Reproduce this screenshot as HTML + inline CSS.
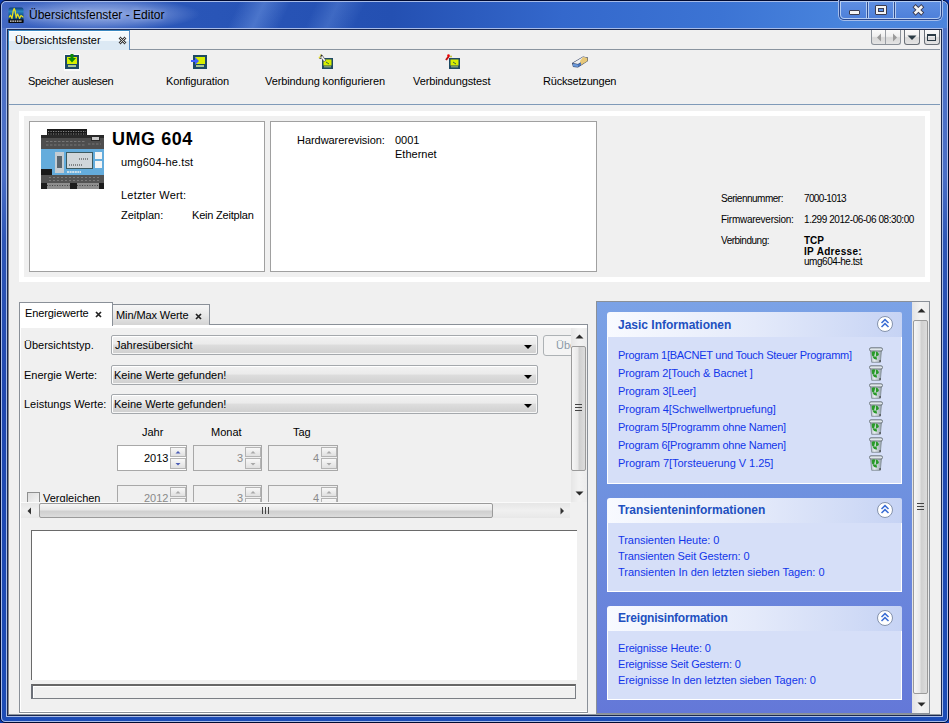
<!DOCTYPE html>
<html><head><meta charset="utf-8">
<style>
*{margin:0;padding:0;box-sizing:border-box}
html,body{width:949px;height:723px;overflow:hidden;background:#0a3aae}
body{position:relative;font-family:"Liberation Sans",sans-serif;font-size:11px;color:#000}
.a{position:absolute}
.t{position:absolute;white-space:nowrap;line-height:1}
#frame{left:0;top:0;width:949px;height:723px;border-radius:6px 6px 5px 5px;background:linear-gradient(#5074c8 0,#4a6ec6 175px,#2e56b6 240px,#2048b0 400px,#1c4cb6 723px);border:1px solid #000a30}
#frameLight{left:1px;top:1px;width:947px;height:721px;border-radius:5px 5px 4px 4px;border:1px solid #a8bce8}
#title{left:2px;top:2px;width:945px;height:26px;border-radius:5px 5px 0 0;
background:
 radial-gradient(ellipse 100px 17px at 98px 12px, rgba(160,182,232,.9) 0, rgba(140,165,225,.6) 55%, rgba(140,165,225,0) 100%),
 linear-gradient(115deg, rgba(255,255,255,0) 0px, rgba(255,255,255,0) 215px, rgba(110,150,225,.5) 238px, rgba(255,255,255,0) 262px, rgba(255,255,255,0) 285px, rgba(110,150,225,.35) 305px, rgba(255,255,255,0) 330px),
 linear-gradient(90deg,#4368c4 0,#3a62c0 25px,#2a56b8 180px,#2450b2 390px,#3468cc 560px,#3c74d4 720px,#4a86de 860px,#4c84dc 949px)}
#contentLight{left:6px;top:28px;width:937px;height:689px;border:1px solid #a8bce8}
#contentDark{left:7px;top:29px;width:935px;height:687px;border:1px solid #1a2850}
#content{left:8px;top:30px;width:933px;height:685px;background:#f0f0f0;border-left:1px solid #8a8a8a;border-right:1px solid #e8e8e8;border-bottom:1px solid #9098a0}
.combo{width:427px;height:20px;border:1px solid #a4a8ac;border-radius:2px;box-shadow:inset 1px 1px 0 #fff,inset -1px -1px 0 #f6f6f6;background:linear-gradient(#f2f2f2 0,#ebebeb 45%,#dddddd 50%,#cfcfcf 100%)}
.combo:after{content:"";position:absolute;right:5px;top:9px;border-left:4px solid transparent;border-right:4px solid transparent;border-top:4px solid #000}
.sbtn{width:16px;border:1px solid #b4b4b4;background:linear-gradient(#f8f8f8,#ececec 50%,#e0e0e0)}
.spin{width:70px;height:26px;border:1px solid #a8a8a8;background:#f0f0f0}

.pane{left:607px;width:295px}
.pane:before{content:"";position:absolute;left:0;top:0;width:295px;height:25px;border-radius:3px 2px 0 0;background:linear-gradient(90deg,#f8faff 0,#e4eafa 50%,#c6d3f4 100%)}
.pane:after{content:"";position:absolute;left:0;top:25px;right:0;bottom:0;background:#d6dff8;border:1px solid #fff;border-top:none}
.ptitle{font-size:12px;font-weight:bold;color:#2150c0}
.plink{font-size:11px;color:#1236ea}
.chev{width:16px;height:16px;border-radius:50%;border:1px solid #8aa0cc;background:#fff}
</style></head>
<body>
<div class="a" id="frame"></div>
<div class="a" id="frameLight"></div>
<div class="a" id="title"></div>
<div class="a" id="contentLight"></div>
<div class="a" id="contentDark"></div>
<div class="a" id="content"></div>

<!-- title bar -->
<svg class="a" style="left:8px;top:7px" width="16" height="16" viewBox="0 0 16 16">
 <defs><linearGradient id="ig" x1="0" y1="0" x2="0" y2="1"><stop offset="0" stop-color="#0c3c74"/><stop offset=".25" stop-color="#2a88c0"/><stop offset=".5" stop-color="#10508e"/><stop offset="1" stop-color="#082a5a"/></linearGradient></defs>
 <rect x="0.5" y="0.5" width="15" height="15.5" rx="2" fill="url(#ig)"/>
 <polyline points="1,10.5 2.5,8.2 4,11.5 5.2,4 6.2,1.5 7.2,4 8.2,10.8 9.5,7 10.6,9 11.6,11.5 13,8.5 14.5,9.5 15.2,10.5" fill="none" stroke="#e6e020" stroke-width="1.3" stroke-linejoin="round"/>
 <rect x="0.5" y="12.5" width="15" height="3.5" fill="#0a0a0a"/>
 <path d="M2 14.2 H14" stroke="#e8e8e8" stroke-width="1.3" stroke-dasharray="1.6 .7"/>
</svg>
<div class="t" style="left:29px;top:9px;font-size:12px;color:#000;text-shadow:0 0 5px rgba(190,205,240,.8)">Übersichtsfenster - Editor</div>

<!-- caption buttons -->
<div class="a" style="left:838px;top:0px;width:105px;height:21px;border:1px solid #a4bcea;border-top:none;border-radius:0 0 6px 6px"></div>
<div class="a" style="left:839px;top:0px;width:103px;height:20px;border:1px solid #28468e;border-top:none;border-radius:0 0 5px 5px"></div>
<div class="a" style="left:840px;top:1px;width:101px;height:18px;border:1px solid #b4ccf2;border-radius:0 0 4px 4px;background:linear-gradient(#5e8ee2,#4e80da)"></div>
<div class="a" style="left:866px;top:2px;width:3px;height:16px;background:#b4ccf2;border-left:1px solid #b4ccf2;border-right:1px solid #b4ccf2"></div>
<div class="a" style="left:867px;top:2px;width:1px;height:16px;background:#2c4a90"></div>
<div class="a" style="left:893px;top:2px;width:1px;height:16px;background:#b4ccf2"></div>
<div class="a" style="left:894px;top:2px;width:1px;height:16px;background:#2c4a90"></div>
<div class="a" style="left:895px;top:2px;width:1px;height:16px;background:#b4ccf2"></div>
<div class="a" style="left:849px;top:10px;width:11px;height:5px;background:#f4f4f4;border:1px solid #3c3c50;border-radius:1px"></div>
<div class="a" style="left:875px;top:5px;width:12px;height:10px;border:1px solid #3c3c50;border-radius:1px;background:#f4f4f4"></div>
<div class="a" style="left:878px;top:8px;width:6px;height:4px;background:#5a92ea;border:1px solid #3c3c50"></div>
<svg class="a" style="left:912px;top:4px" width="13" height="12" viewBox="0 0 13 12">
 <path d="M3.6 3.2 L9.2 8.6 M9.2 3.2 L3.6 8.6" stroke="#3a3a50" stroke-width="4.4" stroke-linecap="square"/>
 <path d="M3.6 3.2 L9.2 8.6 M9.2 3.2 L3.6 8.6" stroke="#f4f4f4" stroke-width="2.6" stroke-linecap="square"/>
</svg>

<!-- editor tab header -->
<div class="a" style="left:9px;top:30px;width:931px;height:20px;background:#f0f0f0;border-bottom:1px solid #8a94a0"></div>
<div class="a" style="left:8px;top:30px;width:122px;height:20px;background:linear-gradient(#f2f8fc 0,#f2f8fc 10px,#dce9f4 10px,#dce9f4 100%);border-left:1px solid #3a88c0;border-top:1px solid #3a88c0;border-right:1px solid #5a8ac0"></div>
<div class="a" style="left:9px;top:31px;width:120px;height:1px;background:#fff"></div>
<div class="t" style="left:15px;top:35px;font-size:11px;color:#000">Übersichtsfenster</div>
<svg class="a" style="left:118px;top:36px" width="9" height="9" viewBox="0 0 9 9">
 <path d="M1.5 1.5 L7.5 7.5 M7.5 1.5 L1.5 7.5" stroke="#3a3a3a" stroke-width="2.6"/>
 <path d="M1.5 1.5 L7.5 7.5 M7.5 1.5 L1.5 7.5" stroke="#d8d8d8" stroke-width="1"/>
</svg>
<!-- nav buttons -->
<div class="a" style="left:871px;top:30px;width:30px;height:15px;border:1px solid #8a9098;border-top:none;border-radius:0 0 3px 3px;background:linear-gradient(#fafafa,#f0f0f0 45%,#d8d8d8 55%,#e4e4e4)"></div>
<div class="a" style="left:885px;top:30px;width:1px;height:14px;background:#9a9ea4"></div>
<svg class="a" style="left:875px;top:33px" width="24" height="9" viewBox="0 0 24 9"><path d="M2 4.5 L6 0.5 L6 8.5Z" fill="#9a9a9a"/><path d="M18 0.5 L22 4.5 L18 8.5Z" fill="#9a9a9a"/></svg>
<div class="a" style="left:904px;top:30px;width:16px;height:15px;border:1px solid #6a7078;border-top:none;border-radius:0 0 3px 3px;background:linear-gradient(#fafafa,#f0f0f0 45%,#d8d8d8 55%,#e4e4e4)"></div>
<svg class="a" style="left:907px;top:35px" width="10" height="6" viewBox="0 0 10 6"><path d="M0.5 0.5 L9.5 0.5 L5 5Z" fill="#2a3a44"/></svg>
<div class="a" style="left:924px;top:30px;width:16px;height:15px;border:1px solid #6a7078;border-top:none;border-radius:0 0 3px 3px;background:linear-gradient(#fafafa,#f0f0f0 45%,#d8d8d8 55%,#e4e4e4)"></div>
<div class="a" style="left:927px;top:34px;width:9px;height:7px;border:1px solid #2a3a44;border-top-width:2px"></div>

<!-- toolbar -->
<div class="a" style="left:9px;top:104px;width:931px;height:1px;background:#7f9ab8"></div>
<svg class="a" style="left:64px;top:53px" width="17" height="18" viewBox="0 0 17 18">
 <rect x="0" y="1" width="16" height="17" fill="#fff" opacity=".7"/>
 <rect x="1" y="2" width="14" height="14" fill="#1e4a64"/>
 <rect x="3" y="4" width="10" height="7" fill="#d8f000"/>
 <rect x="4" y="12" width="8" height="2" fill="#a8c890"/>
 <path d="M6.5 1 L9.5 1 L9.5 5 L12 5 L8 9.5 L4 5 L6.5 5Z" fill="#0a8a0a"/>
</svg>
<svg class="a" style="left:190px;top:53px" width="18" height="18" viewBox="0 0 18 18">
 <rect x="3" y="2" width="14" height="14" fill="#1e4a64"/>
 <rect x="5" y="4" width="10" height="7" fill="#d8f000"/>
 <rect x="6" y="12" width="8" height="2" fill="#a8c890"/>
 <path d="M1 7 L5 7 L5 4 L9 8 L5 12 L5 9 L1 9Z" fill="#4060ff"/>
</svg>
<svg class="a" style="left:317px;top:53px" width="18" height="18" viewBox="0 0 18 18">
 <rect x="5" y="5" width="11" height="11" fill="#1e4a64"/>
 <rect x="6.5" y="6.5" width="8" height="6" fill="#d8f000"/>
 <rect x="7" y="13" width="7" height="1.5" fill="#7a9a70"/>
 <path d="M9 9 L12 11" stroke="#3a6a3a" stroke-width="1"/>
 <path d="M4.2 2.8 L8 8.2" stroke="#555" stroke-width="2.8"/>
 <path d="M4.4 3.2 L7.8 7.8" stroke="#f4f4f8" stroke-width="1.6"/>
 <circle cx="4.2" cy="2.6" r="1" fill="#222"/>
 <circle cx="2.6" cy="4.6" r="1" fill="#e8e030"/>
 <circle cx="3.4" cy="2" r=".8" fill="#f0f060"/>
 <circle cx="3.2" cy="5.4" r=".7" fill="#333"/>
</svg>
<svg class="a" style="left:443px;top:53px" width="18" height="18" viewBox="0 0 18 18">
 <rect x="6" y="5" width="11" height="11" fill="#1e4a64"/>
 <rect x="7.5" y="6.5" width="8" height="6" fill="#d8f000"/>
 <rect x="8" y="13" width="7" height="1.5" fill="#7a9a70"/>
 <path d="M10 9 L13 11" stroke="#3a6a3a" stroke-width="1"/>
 <path d="M3 7 L6 3" stroke="#c01010" stroke-width="2"/>
 <circle cx="5.5" cy="2.5" r="1.3" fill="#e00"/>
 <circle cx="8" cy="3.5" r="0.9" fill="#c0c020"/>
</svg>
<svg class="a" style="left:571px;top:55px" width="18" height="14" viewBox="0 0 18 14">
 <path d="M1 8 L12 1.5 L17 2.5 L17 6 L7 12.5 L2 12Z" fill="#2a3a60"/>
 <path d="M2 8 L7 9 L16 3 L12 2Z" fill="#f0f0f0"/>
 <path d="M9 6 L12 2 L16.5 3 L16.5 6 L10 10Z" fill="#e8c878"/>
 <path d="M2 8.5 L7 9.5 L7 12 L2 11.5Z" fill="#6a98d8"/>
 <path d="M7 9.5 L10 7.5 L10 10 L7 12Z" fill="#4a78c0"/>
</svg>
<div class="t" style="left:28px;top:76px;font-size:11px;letter-spacing:-0.3px">Speicher auslesen</div>
<div class="t" style="left:166px;top:76px;font-size:11px;letter-spacing:-0.15px">Konfiguration</div>
<div class="t" style="left:265px;top:76px;font-size:11px;letter-spacing:-0.1px">Verbindung konfigurieren</div>
<div class="t" style="left:413px;top:76px;font-size:11px;letter-spacing:-0.1px">Verbindungstest</div>
<div class="t" style="left:543px;top:76px;font-size:11px;letter-spacing:-0.2px">Rücksetzungen</div>

<!-- device panel -->
<div class="a" style="left:19px;top:111px;width:911px;height:171px;background:#fff"></div>
<div class="a" style="left:24px;top:116px;width:901px;height:161px;background:#f0f0f0"></div>
<div class="a" style="left:29px;top:121px;width:236px;height:151px;background:#fff;border:1px solid #a0a0a0"></div>
<div class="a" style="left:270px;top:121px;width:327px;height:151px;background:#fff;border:1px solid #a0a0a0"></div>
<svg class="a" style="left:41px;top:129px" width="63" height="60" viewBox="0 0 63 60">
 <rect x="6" y="0" width="40" height="7" fill="#1a1a1a"/>
 <path d="M7 2.5 H45 M7 5 H45" stroke="#8a8a8a" stroke-width="1" stroke-dasharray="1.2 1.3"/>
 <rect x="0" y="6" width="63" height="14" fill="#4e4e4e"/>
 <rect x="0" y="6" width="63" height="3" fill="#2a2a2a"/>
 <rect x="50" y="7" width="9" height="5" fill="#2a2a2a"/>
 <rect x="51" y="8" width="7" height="3" fill="#c8c8c8"/>
 <path d="M5 12.5 H44 M5 16 H44 M47 15 H60" stroke="#777" stroke-width="1" stroke-dasharray="2.5 1.5"/>
 <rect x="0" y="20" width="63" height="26" fill="#64acdc"/>
 <rect x="14" y="23" width="9" height="21" fill="#c4ccd2"/>
 <rect x="16" y="27" width="5" height="12" fill="#5a646c"/>
 <rect x="25" y="23" width="27" height="17" fill="#3c5a60"/>
 <rect x="26" y="24" width="25" height="15" fill="#d0d6da"/>
 <path d="M38 30 h9 M28 36 h14" stroke="#333" stroke-width="1" stroke-dasharray="1 1"/>
 <rect x="54" y="23" width="7" height="7" fill="#f4f4f4"/>
 <rect x="54" y="32" width="7" height="7" fill="#f4f4f4"/>
 <rect x="0" y="40" width="11" height="6" fill="#1a1a1a"/>
 <path d="M26 43 h14" stroke="#f0f0f0" stroke-width="1.6" stroke-dasharray="2 .6"/>
 <rect x="0" y="46" width="63" height="8" fill="#535353"/>
 <path d="M8 48.5 H58 M8 51.5 H58" stroke="#7a7a7a" stroke-width="1" stroke-dasharray="2 2"/>
 <rect x="0" y="54" width="63" height="6" fill="#1c1c1c"/>
 <rect x="6" y="54" width="23" height="6" fill="#8e8e8e"/>
 <rect x="36" y="54" width="22" height="6" fill="#8e8e8e"/>
 <path d="M6 56.5 H29 M36 56.5 H58" stroke="#444" stroke-dasharray="1 1.5"/>
</svg>
<div class="t" style="left:112px;top:130px;font-size:18px;font-weight:bold;letter-spacing:0.55px">UMG 604</div>
<div class="t" style="left:121px;top:157px;font-size:11px;letter-spacing:0.15px">umg604-he.tst</div>
<div class="t" style="left:121px;top:190px;font-size:11px;letter-spacing:0.2px">Letzter Wert:</div>
<div class="t" style="left:121px;top:210px;font-size:11px">Zeitplan:</div>
<div class="t" style="left:192px;top:210px;font-size:11px;letter-spacing:-0.2px">Kein Zeitplan</div>
<div class="t" style="left:297px;top:135px;font-size:11px;letter-spacing:-0.05px">Hardwarerevision:</div>
<div class="t" style="left:395px;top:135px;font-size:11px">0001</div>
<div class="t" style="left:395px;top:149px;font-size:11px">Ethernet</div>
<div class="t" style="left:721px;top:194px;font-size:10px;letter-spacing:-0.49px">Seriennummer:</div>
<div class="t" style="left:804px;top:194px;font-size:10px;letter-spacing:-0.65px">7000-1013</div>
<div class="t" style="left:721px;top:215px;font-size:10px;letter-spacing:-0.26px">Firmwareversion:</div>
<div class="t" style="left:804px;top:215px;font-size:10px;letter-spacing:-0.43px">1.299 2012-06-06 08:30:00</div>
<div class="t" style="left:721px;top:236px;font-size:10px;letter-spacing:-0.49px">Verbindung:</div>
<div class="t" style="left:804px;top:236px;font-size:10px;letter-spacing:0.00px;font-weight:bold">TCP</div>
<div class="t" style="left:804px;top:247px;font-size:10px;letter-spacing:0.32px;font-weight:bold">IP Adresse:</div>
<div class="t" style="left:804px;top:257px;font-size:10px;letter-spacing:-0.46px">umg604-he.tst</div>

<!-- left tab panel -->
<div class="a" style="left:19px;top:324px;width:569px;height:390px;border-right:1px solid #fff;border-bottom:1px solid #fff"></div>
<div class="a" style="left:19px;top:324px;width:569px;height:389px;border:1px solid #8a9098;border-left-color:#8a9098"></div>
<div class="a" style="left:20px;top:325px;width:567px;height:387px;border-top:3px solid #fff;border-left:1px solid #fff;border-bottom:1px solid #fff;background:#f0f0f0"></div>
<!-- tabs -->
<div class="a" style="left:112px;top:304px;width:98px;height:21px;border:1px solid #8a9098;border-bottom:none;background:linear-gradient(#f6f6f6,#e8e8e8 50%,#d4d4d4)"></div>
<div class="a" style="left:19px;top:302px;width:94px;height:24px;border:1px solid #8a9098;border-bottom:none;background:#fff"></div>
<div class="t" style="left:25px;top:308px;font-size:11px;letter-spacing:-0.1px">Energiewerte</div>
<svg class="a" style="left:95px;top:311px" width="7" height="7" viewBox="0 0 7 7"><path d="M1 1 L6 6 M6 1 L1 6" stroke="#222" stroke-width="1.7"/></svg>
<div class="t" style="left:116px;top:310px;font-size:11px;letter-spacing:-0.1px">Min/Max Werte</div>
<svg class="a" style="left:195px;top:313px" width="7" height="7" viewBox="0 0 7 7"><path d="M1 1 L6 6 M6 1 L1 6" stroke="#222" stroke-width="1.7"/></svg>

<!-- form -->
<div class="t" style="left:24px;top:340px;font-size:11px">Übersichtstyp.</div>
<div class="t" style="left:24px;top:370px;font-size:11px">Energie Werte:</div>
<div class="t" style="left:24px;top:399px;font-size:11px">Leistungs Werte:</div>
<div class="a combo" style="left:111px;top:335px"></div>
<div class="a combo" style="left:111px;top:365px"></div>
<div class="a combo" style="left:111px;top:394px"></div>
<div class="t" style="left:115px;top:340px;font-size:11px">Jahresübersicht</div>
<div class="t" style="left:114px;top:370px;font-size:11px">Keine Werte gefunden!</div>
<div class="t" style="left:114px;top:399px;font-size:11px">Keine Werte gefunden!</div>
<div class="a" style="left:543px;top:334px;width:28px;height:23px;overflow:hidden"><div class="a" style="left:0;top:1px;width:40px;height:21px;border:1px solid #adb2b5;border-radius:3px;background:#f4f4f4"></div><div class="t" style="left:13px;top:6px;font-size:11px;color:#8c9aa8">Übersicht</div></div>

<div class="t" style="left:142px;top:427px;font-size:11px">Jahr</div>
<div class="t" style="left:211px;top:427px;font-size:11px">Monat</div>
<div class="t" style="left:293px;top:427px;font-size:11px">Tag</div>

<div class="a spin" style="left:117px;top:445px;background:#fff"></div>
<div class="a spin" style="left:193px;top:445px;width:69px"></div>
<div class="a spin" style="left:268px;top:445px"></div>
<div class="a spin" style="left:117px;top:485px"></div>
<div class="a spin" style="left:193px;top:485px;width:69px"></div>
<div class="a spin" style="left:268px;top:485px"></div>
<div class="t" style="left:144px;top:453px;font-size:11px">2013</div>
<div class="t" style="left:237px;top:453px;font-size:11px;color:#8a8a8a">3</div>
<div class="t" style="left:313px;top:453px;font-size:11px;color:#8a8a8a">4</div>
<div class="t" style="left:144px;top:493px;font-size:11px;color:#8a8a8a">2012</div>
<div class="t" style="left:237px;top:493px;font-size:11px;color:#8a8a8a">3</div>
<div class="t" style="left:313px;top:493px;font-size:11px;color:#8a8a8a">4</div>
<div class="a sbtn" style="left:170px;top:447px;height:10px"></div><div class="a sbtn" style="left:170px;top:458px;height:11px"></div><svg class="a" style="left:170px;top:447px" width="16" height="22" viewBox="0 0 16 22"><path d="M5.5 6.5 L8 4 L10.5 6.5Z" fill="#4b5db5"/><path d="M5.5 16 L10.5 16 L8 18.5Z" fill="#4b5db5"/></svg>
<div class="a sbtn" style="left:245px;top:447px;height:10px"></div><div class="a sbtn" style="left:245px;top:458px;height:11px"></div><svg class="a" style="left:245px;top:447px" width="16" height="22" viewBox="0 0 16 22"><path d="M5.5 6.5 L8 4 L10.5 6.5Z" fill="#a8a8a8"/><path d="M5.5 16 L10.5 16 L8 18.5Z" fill="#a8a8a8"/></svg>
<div class="a sbtn" style="left:321px;top:447px;height:10px"></div><div class="a sbtn" style="left:321px;top:458px;height:11px"></div><svg class="a" style="left:321px;top:447px" width="16" height="22" viewBox="0 0 16 22"><path d="M5.5 6.5 L8 4 L10.5 6.5Z" fill="#a8a8a8"/><path d="M5.5 16 L10.5 16 L8 18.5Z" fill="#a8a8a8"/></svg>
<div class="a sbtn" style="left:170px;top:487px;height:10px"></div><div class="a sbtn" style="left:170px;top:498px;height:11px"></div><svg class="a" style="left:170px;top:487px" width="16" height="22" viewBox="0 0 16 22"><path d="M5.5 6.5 L8 4 L10.5 6.5Z" fill="#a8a8a8"/><path d="M5.5 16 L10.5 16 L8 18.5Z" fill="#a8a8a8"/></svg>
<div class="a sbtn" style="left:245px;top:487px;height:10px"></div><div class="a sbtn" style="left:245px;top:498px;height:11px"></div><svg class="a" style="left:245px;top:487px" width="16" height="22" viewBox="0 0 16 22"><path d="M5.5 6.5 L8 4 L10.5 6.5Z" fill="#a8a8a8"/><path d="M5.5 16 L10.5 16 L8 18.5Z" fill="#a8a8a8"/></svg>
<div class="a sbtn" style="left:321px;top:487px;height:10px"></div><div class="a sbtn" style="left:321px;top:498px;height:11px"></div><svg class="a" style="left:321px;top:487px" width="16" height="22" viewBox="0 0 16 22"><path d="M5.5 6.5 L8 4 L10.5 6.5Z" fill="#a8a8a8"/><path d="M5.5 16 L10.5 16 L8 18.5Z" fill="#a8a8a8"/></svg>
<div class="a" style="left:27px;top:492px;width:13px;height:13px;border:1px solid #8e8f8f;background:linear-gradient(135deg,#dcdcdc,#f6f6f6)"></div>
<div class="t" style="left:43px;top:493px;font-size:11px">Vergleichen</div>
<!-- clip cover below row 2 -->
<div class="a" style="left:21px;top:502px;width:550px;height:1px;background:#fafafa"></div>

<!-- v scrollbar -->
<div class="a" style="left:571px;top:328px;width:16px;height:174px;background:linear-gradient(90deg,#e6e6e6,#f2f2f2 50%,#ececec)"></div>
<svg class="a" style="left:575px;top:334px" width="9" height="5" viewBox="0 0 9 5"><path d="M0.5 4.5 L4.5 0.5 L8.5 4.5Z" fill="#2a2a2a"/></svg>
<div class="a" style="left:571px;top:346px;width:15px;height:125px;border:1px solid #9a9a9a;border-radius:2px;background:linear-gradient(90deg,#f6f6f6,#e8e8e8 45%,#cfcfcf 55%,#dcdcdc)"></div>
<div class="a" style="left:575px;top:404px;width:7px;height:7px;border-top:1px solid #444;border-bottom:1px solid #444"></div>
<div class="a" style="left:575px;top:407px;width:7px;height:1px;background:#444"></div>
<svg class="a" style="left:575px;top:491px" width="9" height="5" viewBox="0 0 9 5"><path d="M0.5 0.5 L8.5 0.5 L4.5 4.5Z" fill="#2a2a2a"/></svg>
<!-- h scrollbar -->
<div class="a" style="left:21px;top:503px;width:549px;height:15px;background:linear-gradient(#e6e6e6,#f0f0f0 50%,#e8e8e8)"></div>
<svg class="a" style="left:27px;top:507px" width="5" height="8" viewBox="0 0 5 8"><path d="M4 0.5 L0.5 4 L4 7.5Z" fill="#333"/></svg>
<div class="a" style="left:39px;top:503px;width:454px;height:15px;border:1px solid #9a9a9a;border-radius:2px;background:linear-gradient(#f6f6f6,#e8e8e8 45%,#cfcfcf 55%,#dcdcdc)"></div>
<div class="a" style="left:262px;top:507px;width:7px;height:7px;border-left:1px solid #444;border-right:1px solid #444"></div>
<div class="a" style="left:265px;top:507px;width:1px;height:7px;background:#444"></div>
<svg class="a" style="left:560px;top:507px" width="5" height="8" viewBox="0 0 5 8"><path d="M0.5 0.5 L4 4 L0.5 7.5Z" fill="#333"/></svg>

<!-- sidebar -->
<div class="a" style="left:596px;top:301px;width:334px;height:413px;border:1px solid #8a9098;background:linear-gradient(#7ba2e6 0,#7094e0 40%,#6478d8 100%)"></div>
<div class="a" style="left:912px;top:302px;width:17px;height:411px;background:linear-gradient(90deg,#e4e4e4,#f2f2f2 50%,#ececec)"></div>
<svg class="a" style="left:917px;top:308px" width="9" height="5" viewBox="0 0 9 5"><path d="M0.5 4.5 L4.5 0.5 L8.5 4.5Z" fill="#2a2a2a"/></svg>
<div class="a" style="left:913px;top:320px;width:15px;height:374px;border:1px solid #9a9a9a;border-radius:2px;background:linear-gradient(90deg,#f6f6f6,#e8e8e8 45%,#cfcfcf 55%,#dcdcdc)"></div>
<div class="a" style="left:917px;top:503px;width:7px;height:7px;border-top:1px solid #444;border-bottom:1px solid #444"></div>
<div class="a" style="left:917px;top:506px;width:7px;height:1px;background:#444"></div>
<svg class="a" style="left:917px;top:702px" width="9" height="5" viewBox="0 0 9 5"><path d="M0.5 0.5 L8.5 0.5 L4.5 4.5Z" fill="#2a2a2a"/></svg>

<div class="a pane" style="top:312px;height:172px"></div>
<div class="t ptitle" style="left:618px;top:319px">Jasic Informationen</div>
<svg class="a" style="left:877px;top:316px" width="16" height="16" viewBox="0 0 16 16"><circle cx="8" cy="8" r="7.5" fill="#fff" stroke="#8492ac" stroke-width="1"/><path d="M4.5 7 L8 3.6 L11.5 7 M4.5 11 L8 7.6 L11.5 11" fill="none" stroke="#3c6ed4" stroke-width="1.5"/></svg>
<div class="t plink" style="left:618px;top:350px;letter-spacing:-0.27px">Program 1[BACNET und Touch Steuer Programm]</div>
<div class="t plink" style="left:618px;top:368px;letter-spacing:-0.11px">Program 2[Touch &amp; Bacnet ]</div>
<div class="t plink" style="left:618px;top:386px;letter-spacing:-0.10px">Program 3[Leer]</div>
<div class="t plink" style="left:618px;top:404px;letter-spacing:-0.06px">Program 4[Schwellwertpruefung]</div>
<div class="t plink" style="left:618px;top:422px;letter-spacing:-0.23px">Program 5[Programm ohne Namen]</div>
<div class="t plink" style="left:618px;top:440px;letter-spacing:-0.23px">Program 6[Programm ohne Namen]</div>
<div class="t plink" style="left:618px;top:458px;letter-spacing:-0.04px">Program 7[Torsteuerung V 1.25]</div>

<svg class="a" style="left:869px;top:347px" width="14" height="16" viewBox="0 0 14 16"><defs><linearGradient id="tg346" x1="0" x2="1"><stop offset="0" stop-color="#a8b4bc"/><stop offset=".35" stop-color="#e8eef2"/><stop offset="1" stop-color="#9aa6ae"/></linearGradient></defs><path d="M1.5 3 L12.5 3 L11.3 15.3 L2.7 15.3Z" fill="url(#tg346)" stroke="#7a868e" stroke-width=".8"/><rect x="0.5" y="0.8" width="13" height="3.2" rx="1.5" fill="#dfe6ea" stroke="#606a72" stroke-width=".9"/><path d="M2.6 5.2 Q4 3.6 6.3 4.6 L5.2 9.4 L3 8.8Z M6.8 4.4 Q9.6 4.6 9.9 8 L6.9 10Z M3.4 9.6 Q4.8 13.2 8.2 12.4 L7.3 9.3Z" fill="#2a9a2a"/><circle cx="11" cy="14" r=".8" fill="#222"/></svg>
<svg class="a" style="left:869px;top:365px" width="14" height="16" viewBox="0 0 14 16"><defs><linearGradient id="tg364" x1="0" x2="1"><stop offset="0" stop-color="#a8b4bc"/><stop offset=".35" stop-color="#e8eef2"/><stop offset="1" stop-color="#9aa6ae"/></linearGradient></defs><path d="M1.5 3 L12.5 3 L11.3 15.3 L2.7 15.3Z" fill="url(#tg364)" stroke="#7a868e" stroke-width=".8"/><rect x="0.5" y="0.8" width="13" height="3.2" rx="1.5" fill="#dfe6ea" stroke="#606a72" stroke-width=".9"/><path d="M2.6 5.2 Q4 3.6 6.3 4.6 L5.2 9.4 L3 8.8Z M6.8 4.4 Q9.6 4.6 9.9 8 L6.9 10Z M3.4 9.6 Q4.8 13.2 8.2 12.4 L7.3 9.3Z" fill="#2a9a2a"/><circle cx="11" cy="14" r=".8" fill="#222"/></svg>
<svg class="a" style="left:869px;top:383px" width="14" height="16" viewBox="0 0 14 16"><defs><linearGradient id="tg382" x1="0" x2="1"><stop offset="0" stop-color="#a8b4bc"/><stop offset=".35" stop-color="#e8eef2"/><stop offset="1" stop-color="#9aa6ae"/></linearGradient></defs><path d="M1.5 3 L12.5 3 L11.3 15.3 L2.7 15.3Z" fill="url(#tg382)" stroke="#7a868e" stroke-width=".8"/><rect x="0.5" y="0.8" width="13" height="3.2" rx="1.5" fill="#dfe6ea" stroke="#606a72" stroke-width=".9"/><path d="M2.6 5.2 Q4 3.6 6.3 4.6 L5.2 9.4 L3 8.8Z M6.8 4.4 Q9.6 4.6 9.9 8 L6.9 10Z M3.4 9.6 Q4.8 13.2 8.2 12.4 L7.3 9.3Z" fill="#2a9a2a"/><circle cx="11" cy="14" r=".8" fill="#222"/></svg>
<svg class="a" style="left:869px;top:401px" width="14" height="16" viewBox="0 0 14 16"><defs><linearGradient id="tg400" x1="0" x2="1"><stop offset="0" stop-color="#a8b4bc"/><stop offset=".35" stop-color="#e8eef2"/><stop offset="1" stop-color="#9aa6ae"/></linearGradient></defs><path d="M1.5 3 L12.5 3 L11.3 15.3 L2.7 15.3Z" fill="url(#tg400)" stroke="#7a868e" stroke-width=".8"/><rect x="0.5" y="0.8" width="13" height="3.2" rx="1.5" fill="#dfe6ea" stroke="#606a72" stroke-width=".9"/><path d="M2.6 5.2 Q4 3.6 6.3 4.6 L5.2 9.4 L3 8.8Z M6.8 4.4 Q9.6 4.6 9.9 8 L6.9 10Z M3.4 9.6 Q4.8 13.2 8.2 12.4 L7.3 9.3Z" fill="#2a9a2a"/><circle cx="11" cy="14" r=".8" fill="#222"/></svg>
<svg class="a" style="left:869px;top:419px" width="14" height="16" viewBox="0 0 14 16"><defs><linearGradient id="tg418" x1="0" x2="1"><stop offset="0" stop-color="#a8b4bc"/><stop offset=".35" stop-color="#e8eef2"/><stop offset="1" stop-color="#9aa6ae"/></linearGradient></defs><path d="M1.5 3 L12.5 3 L11.3 15.3 L2.7 15.3Z" fill="url(#tg418)" stroke="#7a868e" stroke-width=".8"/><rect x="0.5" y="0.8" width="13" height="3.2" rx="1.5" fill="#dfe6ea" stroke="#606a72" stroke-width=".9"/><path d="M2.6 5.2 Q4 3.6 6.3 4.6 L5.2 9.4 L3 8.8Z M6.8 4.4 Q9.6 4.6 9.9 8 L6.9 10Z M3.4 9.6 Q4.8 13.2 8.2 12.4 L7.3 9.3Z" fill="#2a9a2a"/><circle cx="11" cy="14" r=".8" fill="#222"/></svg>
<svg class="a" style="left:869px;top:437px" width="14" height="16" viewBox="0 0 14 16"><defs><linearGradient id="tg436" x1="0" x2="1"><stop offset="0" stop-color="#a8b4bc"/><stop offset=".35" stop-color="#e8eef2"/><stop offset="1" stop-color="#9aa6ae"/></linearGradient></defs><path d="M1.5 3 L12.5 3 L11.3 15.3 L2.7 15.3Z" fill="url(#tg436)" stroke="#7a868e" stroke-width=".8"/><rect x="0.5" y="0.8" width="13" height="3.2" rx="1.5" fill="#dfe6ea" stroke="#606a72" stroke-width=".9"/><path d="M2.6 5.2 Q4 3.6 6.3 4.6 L5.2 9.4 L3 8.8Z M6.8 4.4 Q9.6 4.6 9.9 8 L6.9 10Z M3.4 9.6 Q4.8 13.2 8.2 12.4 L7.3 9.3Z" fill="#2a9a2a"/><circle cx="11" cy="14" r=".8" fill="#222"/></svg>
<svg class="a" style="left:869px;top:455px" width="14" height="16" viewBox="0 0 14 16"><defs><linearGradient id="tg454" x1="0" x2="1"><stop offset="0" stop-color="#a8b4bc"/><stop offset=".35" stop-color="#e8eef2"/><stop offset="1" stop-color="#9aa6ae"/></linearGradient></defs><path d="M1.5 3 L12.5 3 L11.3 15.3 L2.7 15.3Z" fill="url(#tg454)" stroke="#7a868e" stroke-width=".8"/><rect x="0.5" y="0.8" width="13" height="3.2" rx="1.5" fill="#dfe6ea" stroke="#606a72" stroke-width=".9"/><path d="M2.6 5.2 Q4 3.6 6.3 4.6 L5.2 9.4 L3 8.8Z M6.8 4.4 Q9.6 4.6 9.9 8 L6.9 10Z M3.4 9.6 Q4.8 13.2 8.2 12.4 L7.3 9.3Z" fill="#2a9a2a"/><circle cx="11" cy="14" r=".8" fill="#222"/></svg>
<div class="a pane" style="top:498px;height:94px"></div>
<div class="t ptitle" style="left:618px;top:504px">Transienteninformationen</div>
<svg class="a" style="left:877px;top:502px" width="16" height="16" viewBox="0 0 16 16"><circle cx="8" cy="8" r="7.5" fill="#fff" stroke="#8492ac" stroke-width="1"/><path d="M4.5 7 L8 3.6 L11.5 7 M4.5 11 L8 7.6 L11.5 11" fill="none" stroke="#3c6ed4" stroke-width="1.5"/></svg>
<div class="t plink" style="left:618px;top:535px;letter-spacing:-0.05px">Transienten Heute: 0</div>
<div class="t plink" style="left:618px;top:551px;letter-spacing:-0.10px">Transienten Seit Gestern: 0</div>
<div class="t plink" style="left:618px;top:567px;letter-spacing:-0.02px">Transienten In den letzten sieben Tagen: 0</div>

<div class="a pane" style="top:606px;height:94px"></div>
<div class="t ptitle" style="left:618px;top:612px;letter-spacing:-0.2px">Ereignisinformation</div>
<svg class="a" style="left:877px;top:610px" width="16" height="16" viewBox="0 0 16 16"><circle cx="8" cy="8" r="7.5" fill="#fff" stroke="#8492ac" stroke-width="1"/><path d="M4.5 7 L8 3.6 L11.5 7 M4.5 11 L8 7.6 L11.5 11" fill="none" stroke="#3c6ed4" stroke-width="1.5"/></svg>
<div class="t plink" style="left:618px;top:643px;letter-spacing:-0.18px">Ereignisse Heute: 0</div>
<div class="t plink" style="left:618px;top:659px;letter-spacing:-0.20px">Ereignisse Seit Gestern: 0</div>
<div class="t plink" style="left:618px;top:675px;letter-spacing:-0.08px">Ereignisse In den letzten sieben Tagen: 0</div>

<!-- text area + progress -->
<div class="a" style="left:31px;top:530px;width:546px;height:150px;background:#fff;border-top:1px solid #6a6a6a;border-left:1px solid #6a6a6a"></div>
<div class="a" style="left:31px;top:684px;width:545px;height:15px;border:1px solid #7a7e84;border-top:2px solid #666;border-left:2px solid #6c7078;background:#f0f0f0;box-shadow:inset 1px 1px 0 #fff"></div>

</body></html>
